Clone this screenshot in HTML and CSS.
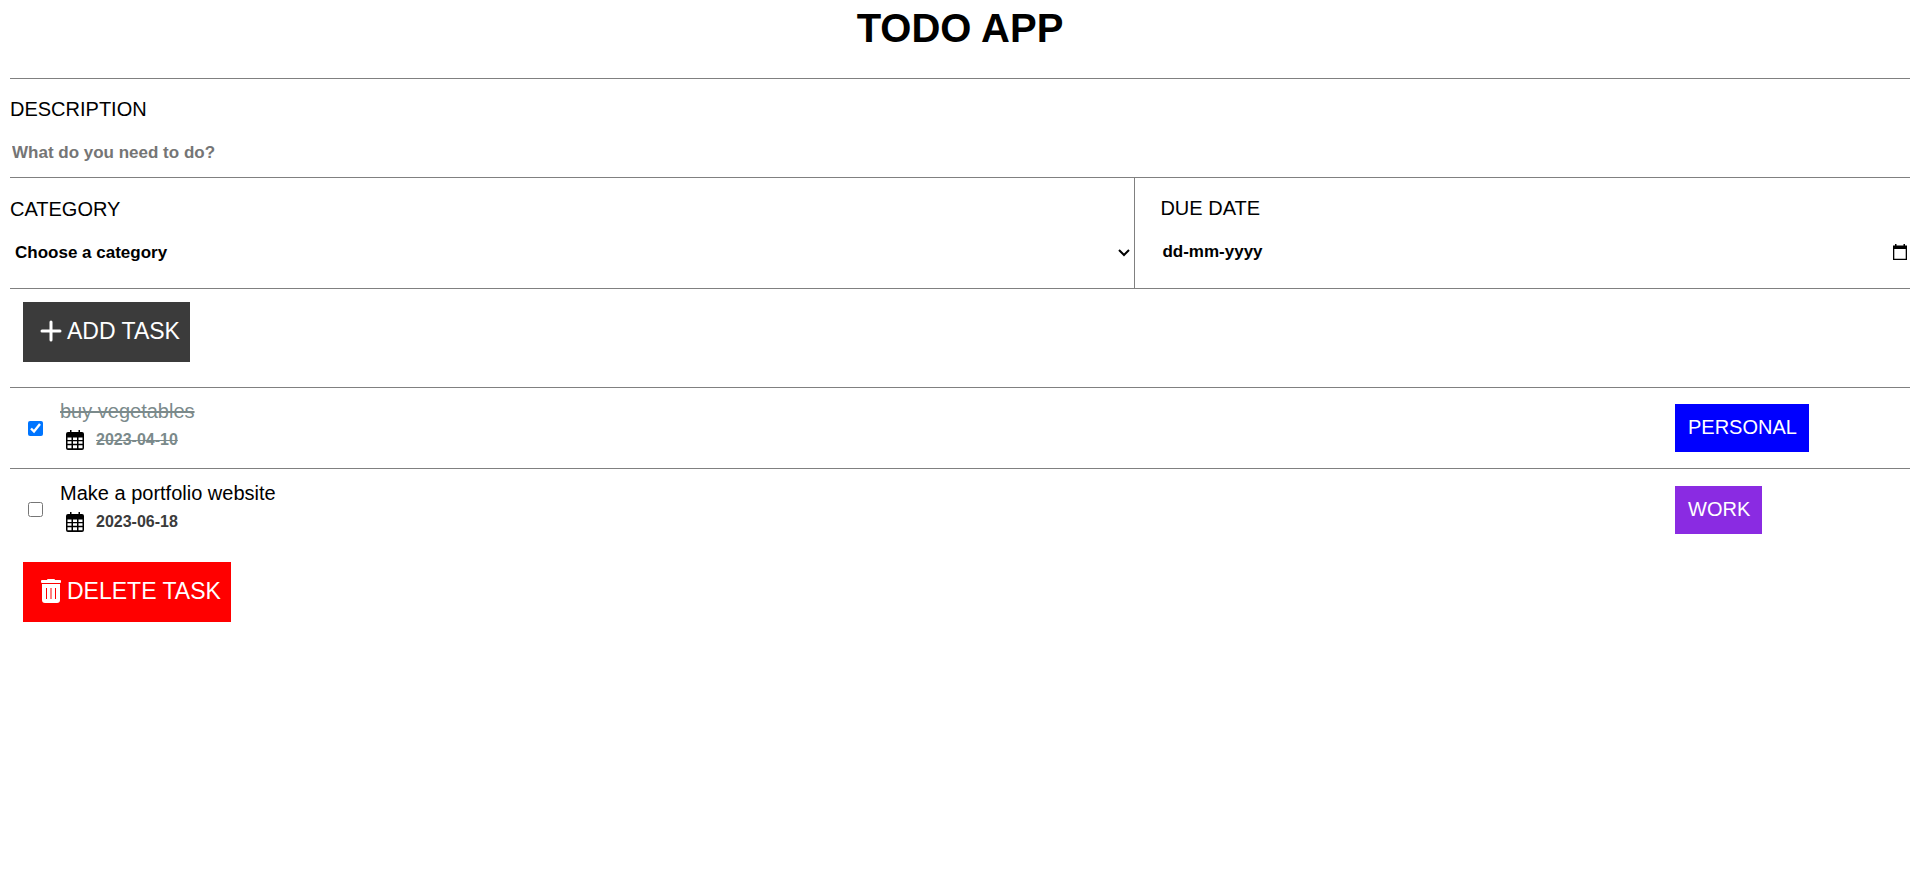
FILE: index.html
```
<!DOCTYPE html>
<html lang="en">
<head>
    <meta charset="UTF-8">
    <meta name="viewport" content="width=device-width, initial-scale=1.0">
    <title>Todo App</title>
    <link rel="stylesheet" href="styles.css">
</head>
<body>
    <h1>TODO APP</h1>
    <form class="task-form">
        <div class="field description">
            <label for="desc">DESCRIPTION</label>
            <input type="text" id="desc" placeholder="What do you need to do?">
        </div>
        <div class="field-row">
            <div class="field category">
                <label for="category">CATEGORY</label>
                <div class="control">
                    <select id="category">
                        <option>Choose a category</option>
                        <option>Personal</option>
                        <option>Work</option>
                    </select>
                    <svg class="chevron" viewBox="0 0 12 8"><path d="M1 1l5 5 5-5" stroke="black" stroke-width="2" fill="none"/></svg>
                </div>
            </div>
            <div class="field due-date">
                <label for="date">DUE DATE</label>
                <div class="control">
                    <input type="text" id="date" placeholder="dd-mm-yyyy">
                    <button type="button" class="picker-btn" aria-label="Show date picker">
                        <svg viewBox="0 0 14 16"><path fill-rule="evenodd" d="M2 0h1.500v1.500h7V0H12v1.500h2V16H0V1.500h2zM1.300 5v9.700h11.400V5z"/></svg>
                    </button>
                </div>
            </div>
        </div>
        <button type="button" class="btn add-btn">
            <svg class="btn-icon" viewBox="0 0 24 24"><path d="M12 3v18M3 12h18" stroke="currentColor" stroke-width="3" stroke-linecap="round" fill="none"/></svg>
            ADD TASK
        </button>
    </form>

    <ul class="task-list">
        <li class="task done">
            <input type="checkbox" id="task-1" checked>
            <div class="task-info">
                <label for="task-1">buy vegetables</label>
                <div class="task-date">
                    <svg class="cal-icon" viewBox="0 0 18 20"><path fill-rule="evenodd" d="M4 0h1.500v2h7V0H14v2h2a2 2 0 0 1 2 2v14a2 2 0 0 1-2 2H2a2 2 0 0 1-2-2V4a2 2 0 0 1 2-2h2zM1.500 7.500V10h4V7.500zM7 7.500V10h4V7.500zM12.500 7.500V10h4V7.500zM1.500 11.300v2.500h4v-2.500zM7 11.300v2.500h4v-2.500zM12.500 11.300v2.500h4v-2.500zM1.500 15.200v3h4v-3zM7 15.200v3h4v-3zM12.500 15.200v3h4v-3z"/></svg>
                    <span>2023-04-10</span>
                </div>
            </div>
            <div class="task-category"><span class="badge personal">PERSONAL</span></div>
        </li>
        <li class="task">
            <input type="checkbox" id="task-2">
            <div class="task-info">
                <label for="task-2">Make a portfolio website</label>
                <div class="task-date">
                    <svg class="cal-icon" viewBox="0 0 18 20"><path fill-rule="evenodd" d="M4 0h1.500v2h7V0H14v2h2a2 2 0 0 1 2 2v14a2 2 0 0 1-2 2H2a2 2 0 0 1-2-2V4a2 2 0 0 1 2-2h2zM1.500 7.500V10h4V7.500zM7 7.500V10h4V7.500zM12.500 7.500V10h4V7.500zM1.500 11.300v2.500h4v-2.500zM7 11.300v2.500h4v-2.500zM12.500 11.300v2.500h4v-2.500zM1.500 15.200v3h4v-3zM7 15.200v3h4v-3zM12.500 15.200v3h4v-3z"/></svg>
                    <span>2023-06-18</span>
                </div>
            </div>
            <div class="task-category"><span class="badge work">WORK</span></div>
        </li>
    </ul>
    <button type="button" class="btn delete-btn">
        <svg class="btn-icon" viewBox="0 0 24 24"><path fill-rule="evenodd" d="M8 1q0-1 1-1h6q1 0 1 1h5a1 1 0 0 1 1 1v1a1 1 0 0 1-1 1H3a1 1 0 0 1-1-1V2a1 1 0 0 1 1-1zM3 5h18v16a3 3 0 0 1-3 3H6a3 3 0 0 1-3-3zM7 9v11h1V9zM11.500 9v11h1V9zM16 9v11h1V9z" fill="currentColor"/></svg>
        DELETE TASK
    </button>
</body>
</html>
```
FILE: styles.css
```
* {
    margin: 0;
    padding: 0;
    box-sizing: border-box;
    font-family: Arial, "Liberation Sans", sans-serif;
}

body {
    padding: 5px 10px;
    background: white;
    color: black;
}

h1 {
    font-size: 40px;
    line-height: 46px;
    text-align: center;
    margin-bottom: 27px;
}

.task-form {
    border-top: 1px solid gray;
    border-bottom: 1px solid gray;
}

.field {
    display: flex;
    flex-direction: column;
    gap: 21px;
    font-size: 20px;
    line-height: 23px;
}

.field input,
.field select {
    width: 100%;
    height: 21px;
    border: none;
    outline: none;
    background: transparent;
    color: black;
    font-size: 17px;
    font-weight: bold;
}

.field input {
    padding: 1px 2px;
}

.field select {
    appearance: none;
    padding: 0 20px 0 5px;
}

.control {
    display: flex;
    position: relative;
}

.chevron {
    position: absolute;
    right: 4px;
    top: 7px;
    width: 12px;
    height: 8px;
    pointer-events: none;
}

.due-date input::placeholder {
    color: black;
}

.picker-btn {
    width: 20px;
    height: 21px;
    border: none;
    background: transparent;
    cursor: pointer;
}

.picker-btn svg {
    display: block;
    width: 14px;
    height: 16px;
    margin: 3px 2px;
}

.description {
    padding: 19px 0 14px;
}

.field-row {
    display: flex;
    border-top: 1px solid gray;
    border-bottom: 1px solid gray;
}

.category {
    flex: 3;
    padding: 20px 0 25px;
}

.due-date {
    flex: 2;
    padding: 19px 0 25px 25px;
    border-left: 1px solid gray;
}

.btn {
    display: flex;
    align-items: center;
    gap: 4px;
    height: 60px;
    padding: 0 10px 2px 16px;
    border: none;
    color: white;
    font-size: 23px;
    cursor: pointer;
}

.btn-icon {
    width: 24px;
    height: 24px;
}

.add-btn {
    margin: 13px 13px 25px;
    background: #3b3b3b;
}

.delete-btn {
    margin: 12px 13px;
    background: red;
}

.task-list {
    list-style: none;
}

.task {
    display: grid;
    grid-template-columns: 50px 1fr 235px;
    align-items: center;
    height: 80px;
}

.task + .task {
    height: 82px;
    border-top: 1px solid gray;
}

.task input {
    width: 15px;
    height: 15px;
    margin-left: 18px;
}

.task-info label {
    display: block;
    font-size: 20px;
    line-height: 24px;
}

.task-date {
    display: flex;
    align-items: center;
    gap: 12px;
    padding: 7px 6px;
    font-size: 16px;
    line-height: 20px;
    font-weight: bold;
    color: #3b3b3b;
}

.cal-icon {
    width: 18px;
    height: 20px;
    fill: black;
}

.done label,
.done .task-date span {
    color: #7b8a8b;
    text-decoration: line-through;
}

.badge {
    display: block;
    width: fit-content;
    padding: 11px 12px 13px 13px;
    color: white;
    font-size: 20px;
    line-height: 24px;
}

.personal {
    background: blue;
}

.work {
    background: blueviolet;
}
```
